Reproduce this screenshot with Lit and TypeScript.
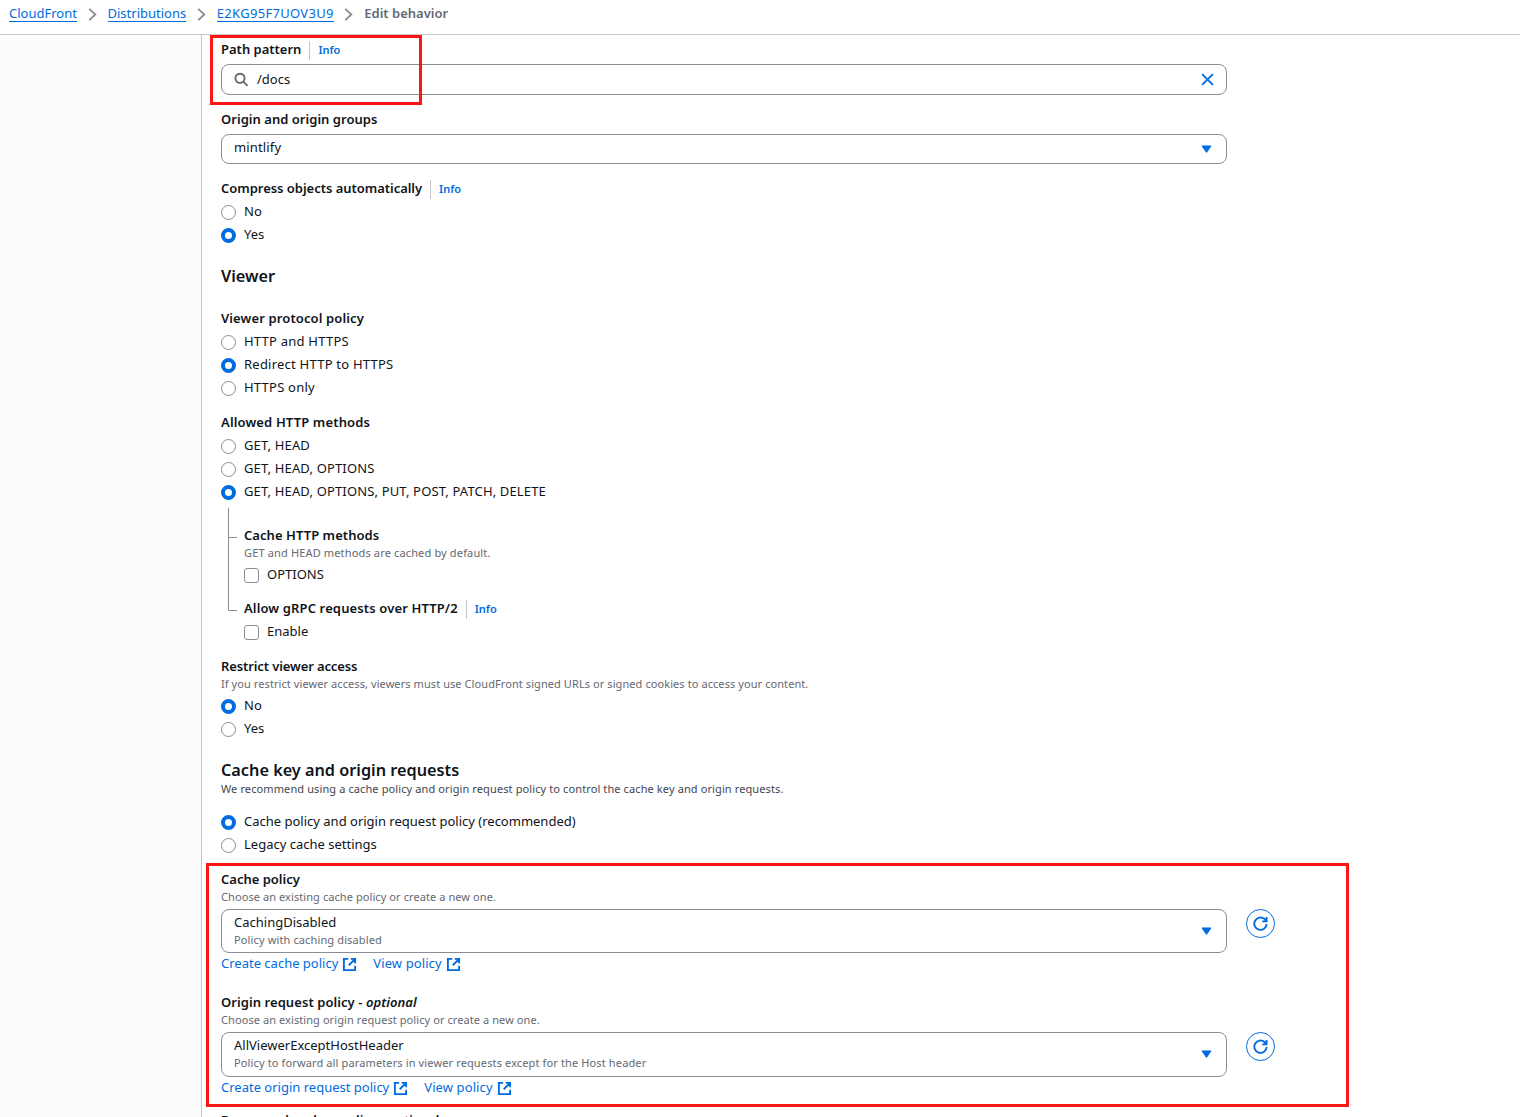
import { css, html, LitElement, nothing, svg, type SVGTemplateResult, type TemplateResult } from 'lit'
import { customElement, property, state } from 'lit/decorators.js'
import { classMap } from 'lit/directives/class-map.js'

interface Crumb {
  text: string
  kind: 'name' | 'id' | 'current'
}

const CRUMBS: Crumb[] = [
  { text: 'CloudFront', kind: 'name' },
  { text: 'Distributions', kind: 'name' },
  { text: 'E2KG95F7UOV3U9', kind: 'id' },
  { text: 'Edit behavior', kind: 'current' },
]

const ICONS: Record<string, SVGTemplateResult> = {
  search: svg`<circle cx="6.4" cy="6.7" r="4.9" /><path d="M10 10.3 14.5 14.8" />`,
  close: svg`<path d="M2.2 2.2 13.8 13.8M13.8 2.2 2.2 13.8" />`,
  caret: svg`<path d="M3.2 4.2h9.6L8 11.1z" fill="currentColor" stroke-linejoin="round" stroke-width="1" />`,
  external: svg`<path d="M6.6 2H2v12h12V9.4M9.4 2H14v4.6M7.2 8.8 14 2" />`,
  refresh: svg`<path d="M14.6 8.6A6.6 6.6 0 1 1 12.3 3.2L14 4.8M14.5 1v4.7H9.8" />`,
  chevron: svg`<path d="M4.5 2 11 8 4.5 14" />`,
}

function icon(name: string, className = ''): TemplateResult {
  return html`<svg class="icon ${className}" viewBox="0 0 16 16" aria-hidden="true">${ICONS[name]}</svg>`
}

const iconStyles = css`
  .icon {
    display: block;
    flex: none;
    width: 15px;
    height: 15px;
    fill: none;
    stroke: currentColor;
    stroke-width: 2;
  }
`

/**
 * Label, optional info link and description placed above a form control.
 */
@customElement('form-field')
export class FormField extends LitElement {
  @property() label = ''
  @property() description = ''
  @property({ type: Boolean }) info = false
  @property({ type: Boolean }) optional = false

  protected render(): TemplateResult {
    return html`
      <div class="heading">
        <span class="label">${this.label}${this.optional ? html` - <i>optional</i>` : nothing}</span>
        ${this.info ? html`<a class="info">Info</a>` : nothing}
      </div>
      ${this.description ? html`<div class="description">${this.description}</div>` : nothing}
      <slot></slot>
    `
  }

  static styles = css`
    :host {
      display: block;
    }

    .heading {
      display: flex;
      align-items: center;
      height: 20px;
      white-space: nowrap;
    }

    .label {
      font-size: 13px;
      font-weight: 600;
      letter-spacing: var(--label-tracking);
    }

    .info {
      margin: 2px 0 0 8px;
      padding: 0 0 2px 8px;
      border-left: 1px solid #c6c6cd;
      color: #006ce0;
      font-size: 11px;
      font-weight: 600;
      line-height: 17px;
      cursor: pointer;
    }

    .description {
      height: 16px;
      color: #656871;
      font-size: 11px;
      line-height: 16px;
      letter-spacing: var(--small-tracking);
      white-space: nowrap;
    }
  `
}

/**
 * Column of radio buttons or checkboxes.
 */
@customElement('choice-group')
export class ChoiceGroup extends LitElement {
  @property({ type: Array }) options: string[] = []
  @property({ type: Number }) selected = -1
  @property() kind: 'radio' | 'checkbox' = 'radio'

  private _select(index: number): void {
    this.selected = this.kind === 'checkbox' && this.selected === index ? -1 : index
  }

  protected render(): TemplateResult[] {
    return this.options.map(
      (option, index) => html`
        <div
          class="choice"
          role=${this.kind}
          aria-checked=${this.selected === index ? 'true' : 'false'}
          @click=${() => {
            this._select(index)
          }}
        >
          <span class=${classMap({ control: true, [this.kind]: true, checked: this.selected === index })}></span>
          <span class="text">${option}</span>
        </div>
      `,
    )
  }

  static styles = css`
    :host {
      display: block;
      padding-top: 2px;
    }

    .choice {
      display: flex;
      align-items: center;
      height: 23px;
      font-size: 13px;
      letter-spacing: var(--body-tracking);
      white-space: nowrap;
      cursor: pointer;
    }

    .control {
      box-sizing: border-box;
      width: 15px;
      height: 15px;
      margin: 2px 8px 0 0;
      border: 1px solid #8c8c94;
      background: #fff;
    }

    .radio {
      border-radius: 50%;
    }

    .checkbox {
      border-radius: 3px;
    }

    .checked {
      border: 4px solid #006ce0;
    }

    .text {
      margin-bottom: 2px;
    }
  `
}

/**
 * Closed select showing its current value, with an optional second line.
 */
@customElement('select-box')
export class SelectBox extends LitElement {
  @property() value = ''
  @property() detail = ''

  protected render(): TemplateResult {
    return html`
      <button class=${classMap({ trigger: true, detailed: this.detail !== '' })}>
        <span class="content">
          <span class="value">${this.value}</span>
          ${this.detail ? html`<span class="detail">${this.detail}</span>` : nothing}
        </span>
        ${icon('caret', 'caret')}
      </button>
    `
  }

  static styles = [
    iconStyles,
    css`
      :host {
        display: block;
      }

      .trigger {
        display: flex;
        align-items: center;
        justify-content: space-between;
        box-sizing: border-box;
        width: 1006px;
        height: 30px;
        padding: 0 12px;
        border: 1px solid #8c8c94;
        border-radius: 8px;
        background: #fff;
        color: inherit;
        font: inherit;
        text-align: left;
      }

      .detailed {
        height: var(--select-height, 44px);
      }

      .content {
        display: flex;
        flex-direction: column;
        margin-bottom: 4px;
      }

      .detailed .content {
        margin-bottom: 2px;
      }

      .value {
        font-size: 13px;
        line-height: 18px;
        letter-spacing: var(--body-tracking);
      }

      .detail {
        color: #656871;
        font-size: 11px;
        line-height: 17px;
        letter-spacing: var(--detail-tracking);
      }

      .caret {
        color: #006ce0;
      }
    `,
  ]
}

@customElement('app-root')
export class AppRoot extends LitElement {
  @state()
  private _path = '/docs'

  private _renderHeader(): TemplateResult {
    return html`
      <nav class="crumbs">
        ${CRUMBS.map((crumb, index) => html`
          ${index > 0 ? icon('chevron', 'separator') : nothing}
          <span class="crumb ${crumb.kind}">${crumb.text}</span>
        `)}
      </nav>
    `
  }

  private _renderPath(): TemplateResult {
    return html`
      <form-field label="Path pattern" info>
        <div class="search">
          ${icon('search', 'glass')}
          <input
            class="input"
            aria-label="Path pattern"
            .value=${this._path}
            @input=${(event: Event) => {
              this._path = (event.currentTarget as HTMLInputElement).value
            }}
          />
          <button
            class="clear"
            aria-label="Clear"
            @click=${() => {
              this._path = ''
            }}
          >
            ${icon('close')}
          </button>
        </div>
      </form-field>
    `
  }

  private _renderPolicy(value: string, detail: string, create: string): TemplateResult {
    return html`
      <div class="picker">
        <select-box .value=${value} .detail=${detail}></select-box>
        <button class="refresh" aria-label="Refresh">${icon('refresh')}</button>
      </div>
      <div class="links">
        <a class="link">${create}${icon('external', 'external')}</a>
        <a class="link view">View policy${icon('external', 'external')}</a>
      </div>
    `
  }

  protected render(): TemplateResult {
    return html`
      ${this._renderHeader()}
      <div class="body">
        <aside class="side"></aside>
        <main class="form">
          ${this._renderPath()}

          <form-field class="origin" label="Origin and origin groups">
            <select-box class="single" value="mintlify"></select-box>
          </form-field>

          <form-field class="compress" label="Compress objects automatically" info>
            <choice-group .options=${['No', 'Yes']} .selected=${1}></choice-group>
          </form-field>

          <h2 class="title viewer">Viewer</h2>

          <form-field class="protocol" label="Viewer protocol policy">
            <choice-group
              .options=${['HTTP and HTTPS', 'Redirect HTTP to HTTPS', 'HTTPS only']}
              .selected=${1}
            ></choice-group>
          </form-field>

          <form-field class="field methods" label="Allowed HTTP methods">
            <choice-group
              .options=${['GET, HEAD', 'GET, HEAD, OPTIONS', 'GET, HEAD, OPTIONS, PUT, POST, PATCH, DELETE']}
              .selected=${2}
            ></choice-group>
          </form-field>

          <div class="nested">
            <div class="tree">
              <span class="branch first"></span>
              <span class="branch second"></span>
            </div>
            <div class="leaves">
              <form-field
                class="cached"
                label="Cache HTTP methods"
                description="GET and HEAD methods are cached by default."
              >
                <choice-group kind="checkbox" .options=${['OPTIONS']}></choice-group>
              </form-field>
              <form-field class="grpc" label="Allow gRPC requests over HTTP/2" info>
                <choice-group kind="checkbox" .options=${['Enable']}></choice-group>
              </form-field>
            </div>
          </div>

          <form-field
            class="field restrict"
            label="Restrict viewer access"
            description="If you restrict viewer access, viewers must use CloudFront signed URLs or signed cookies to access your content."
          >
            <choice-group .options=${['No', 'Yes']} .selected=${0}></choice-group>
          </form-field>

          <h2 class="title cache">Cache key and origin requests</h2>
          <p class="subtitle">
            We recommend using a cache policy and origin request policy to control the cache key and origin requests.
          </p>
          <choice-group
            .options=${['Cache policy and origin request policy (recommended)', 'Legacy cache settings']}
            .selected=${0}
          ></choice-group>

          <form-field
            class="field"
            label="Cache policy"
            description="Choose an existing cache policy or create a new one."
          >
            ${this._renderPolicy('CachingDisabled', 'Policy with caching disabled', 'Create cache policy')}
          </form-field>

          <form-field
            class="request"
            label="Origin request policy"
            optional
            description="Choose an existing origin request policy or create a new one."
          >
            ${this._renderPolicy(
              'AllViewerExceptHostHeader',
              'Policy to forward all parameters in viewer requests except for the Host header',
              'Create origin request policy',
            )}
          </form-field>

          <form-field class="response" label="Response headers policy" optional></form-field>
        </main>
      </div>
      <div class="mark mark-path"></div>
      <div class="mark mark-policies"></div>
    `
  }

  static styles = [
    iconStyles,
    css`
      :host {
        --label-tracking: 0px;
        --body-tracking: 0px;
        --small-tracking: 0.08px;
        --detail-tracking: 0.13px;
        position: relative;
        display: flex;
        flex-direction: column;
        height: 1117px;
        overflow: hidden;
        background: #fff;
        color: #0f141a;
        font-family: 'Noto Sans', 'Open Sans', sans-serif;
        font-size: 13px;
      }

      .crumbs {
        display: flex;
        flex: none;
        align-items: center;
        box-sizing: border-box;
        height: 35px;
        padding: 0 9px 7px;
        border-bottom: 1px solid #c6c6cd;
        white-space: nowrap;
      }

      .crumb {
        border-bottom: 1px solid #006ce0;
        color: #006ce0;
        line-height: 15px;
        cursor: pointer;
      }

      .id {
        letter-spacing: 0.3px;
      }

      .current {
        border-bottom-color: transparent;
        color: #656871;
        font-weight: 600;
        cursor: default;
      }

      .separator {
        margin: 2px 7.8px 0;
        color: #8c8c94;
      }

      .body {
        display: flex;
        flex: 1;
        min-height: 0;
      }

      .side {
        box-sizing: border-box;
        flex: none;
        width: 202px;
        border-right: 1px solid #c6c6cd;
        background: #fcfcfd;
      }

      .form {
        flex: 1;
        padding: 4px 0 0 19px;
      }

      .search {
        display: flex;
        align-items: center;
        box-sizing: border-box;
        width: 1006px;
        height: 31px;
        margin-top: 5px;
        padding: 0 11px 0 12px;
        border: 1px solid #8c8c94;
        border-radius: 8px;
      }

      .glass {
        color: #656871;
      }

      .input {
        flex: 1;
        padding: 0 0 2px 8px;
        border: 0;
        outline: 0;
        background: transparent;
        color: inherit;
        font: inherit;
      }

      .clear {
        padding: 0;
        border: 0;
        background: none;
        color: #006ce0;
      }

      .origin,
      .compress {
        margin-top: 14px;
      }

      .origin {
        --label-tracking: 0.03px;
        --body-tracking: 0.15px;
      }

      .compress {
        --label-tracking: -0.03px;
      }

      .protocol {
        --label-tracking: 0.12px;
        --body-tracking: 0.23px;
      }

      .methods {
        --label-tracking: 0.14px;
        --body-tracking: 0.15px;
      }

      .cached {
        --label-tracking: 0.06px;
        --small-tracking: 0.15px;
      }

      .restrict {
        --label-tracking: -0.11px;
      }

      .single {
        margin-top: 5px;
      }

      .title {
        margin: 0;
        font-size: 16.25px;
        font-weight: 600;
        line-height: 24px;
        white-space: nowrap;
      }

      .viewer {
        margin: 18px 0 20px;
      }

      .cache {
        margin-top: 18px;
      }

      .subtitle {
        height: 16px;
        margin: -1px 0 11px;
        color: #424650;
        font-size: 11px;
        line-height: 16px;
        letter-spacing: 0.11px;
        white-space: nowrap;
      }

      .field {
        margin-top: 13px;
      }

      .nested {
        display: flex;
        padding: 5px 0 0 7px;
      }

      .tree {
        display: flex;
        flex-direction: column;
        width: 16px;
      }

      .branch {
        box-sizing: border-box;
        width: 9px;
        border: solid #8c8c94;
        border-width: 0 0 1px 1px;
      }

      .first {
        height: 30px;
      }

      .second {
        height: 73px;
      }

      .leaves {
        padding-top: 17px;
      }

      .grpc {
        --label-tracking: 0.13px;
        margin-top: 12px;
      }

      .picker {
        display: flex;
        gap: 19px;
        margin-top: 4px;
      }

      .refresh {
        display: grid;
        place-items: center;
        box-sizing: border-box;
        width: 29px;
        height: 29px;
        padding: 0;
        border: 1px solid #006ce0;
        border-radius: 50%;
        background: #fff;
        color: #006ce0;
      }

      .links {
        display: flex;
        gap: 16px;
        height: 20px;
      }

      .link {
        display: flex;
        align-items: center;
        gap: 4px;
        color: #006ce0;
        white-space: nowrap;
        cursor: pointer;
      }

      .view {
        letter-spacing: 0.1px;
      }

      .external {
        margin-top: 2px;
      }

      .request {
        --label-tracking: 0.07px;
        --select-height: 45px;
        margin-top: 19px;
      }

      .response {
        margin-top: 13px;
      }

      .mark {
        position: absolute;
        box-sizing: border-box;
        border: 3px solid #fd1414;
        pointer-events: none;
      }

      .mark-path {
        top: 35px;
        left: 210px;
        width: 212px;
        height: 70px;
      }

      .mark-policies {
        top: 863px;
        left: 206px;
        width: 1143px;
        height: 244px;
      }
    `,
  ]
}
